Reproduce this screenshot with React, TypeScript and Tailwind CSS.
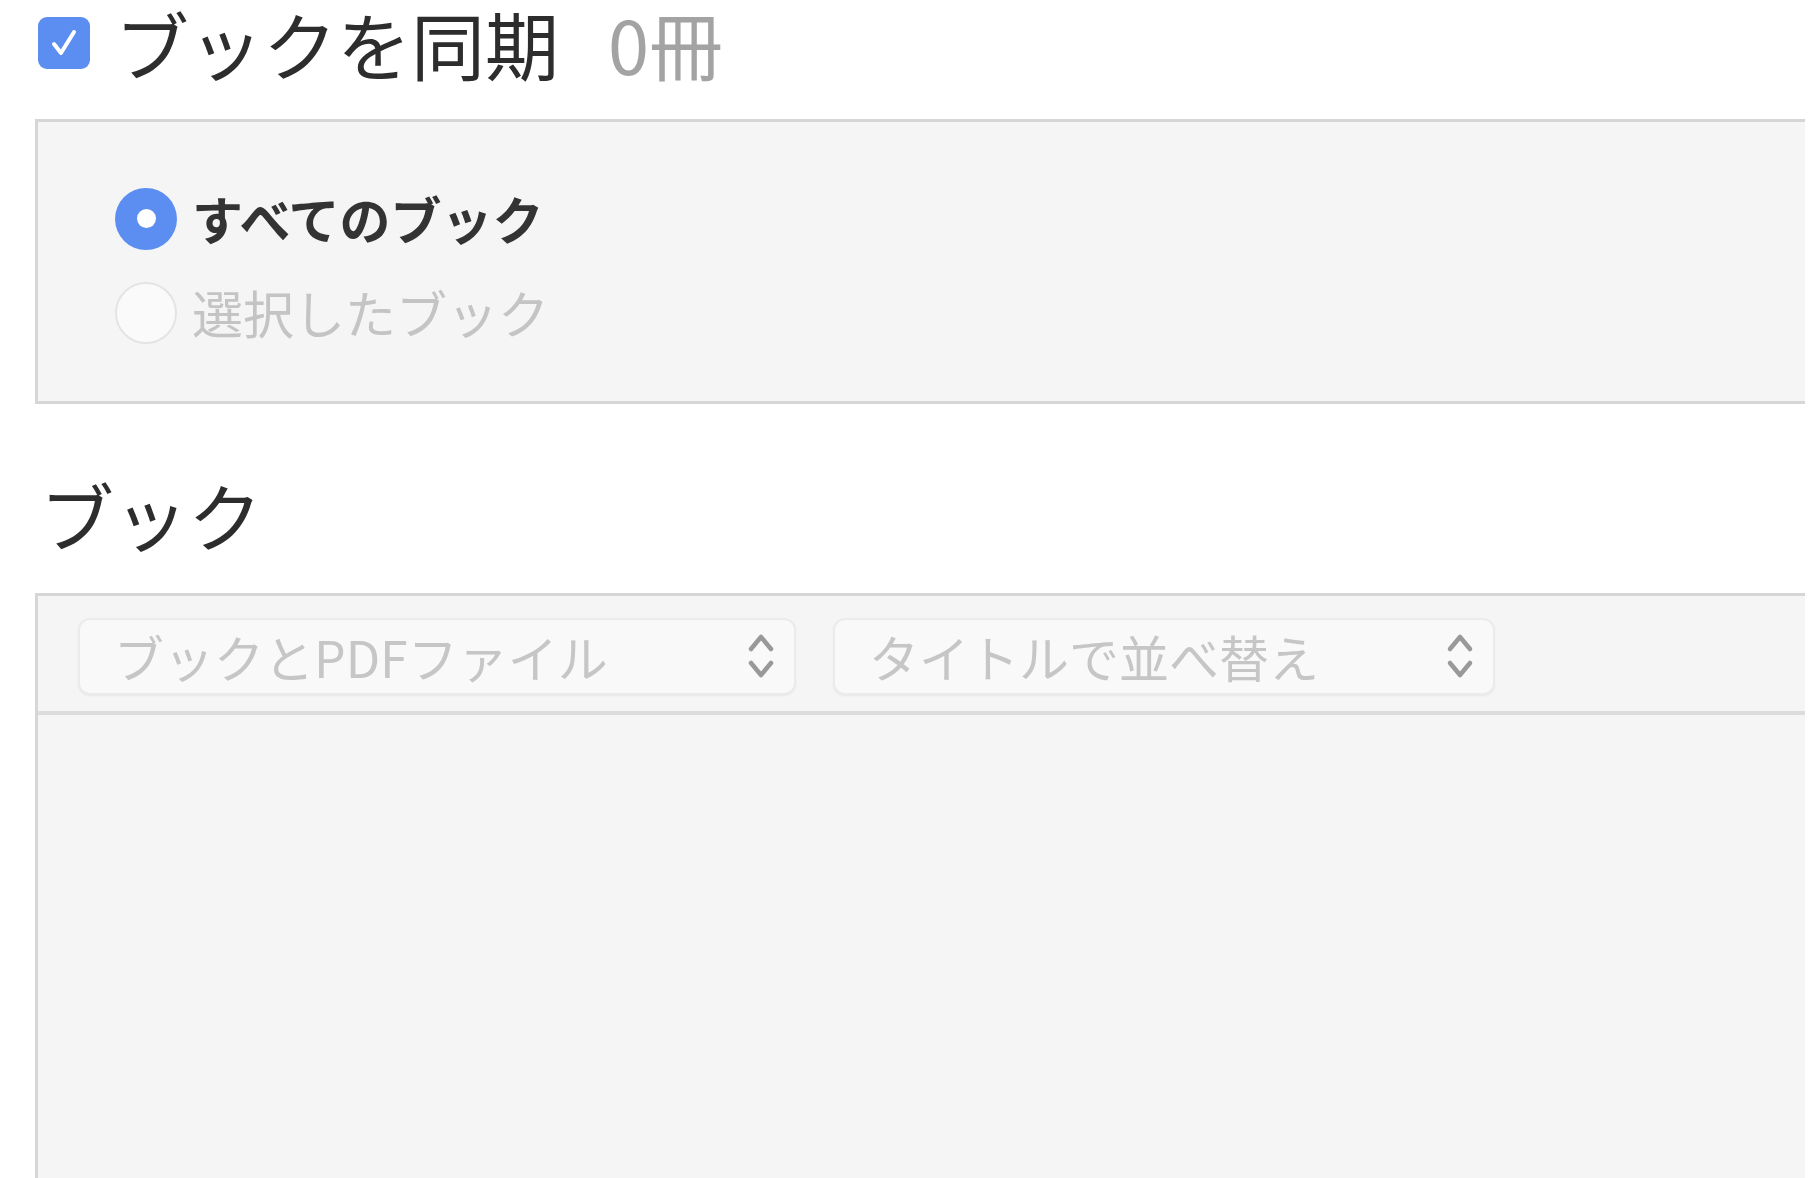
import React from "react";

const font = "font-['Hiragino_Sans','Noto_Sans_CJK_JP',sans-serif]";

function UpDown() {
  return (
    <svg width="34" height="56" viewBox="0 0 34 56" fill="none" className="shrink-0">
      <path d="M7 21 L17 9 L27 21" stroke="#999999" strokeWidth="4.5" strokeLinecap="round" strokeLinejoin="round" />
      <path d="M7 35 L17 47 L27 35" stroke="#999999" strokeWidth="4.5" strokeLinecap="round" strokeLinejoin="round" />
    </svg>
  );
}

function PopUp({ label, width }: { label: string; width: string }) {
  return (
    <div
      className={`${width} h-[77px] flex items-center justify-between pl-[34px] pr-[16px] rounded-[12px] bg-[#f9f9f9] border-2 border-[#ebebeb] shadow-[0_1px_2px_rgba(0,0,0,0.06)]`}
    >
      <span className="text-[50px] leading-tight text-[#c6c6c6] whitespace-nowrap">{label}</span>
      <UpDown />
    </div>
  );
}

export default function App() {
  return (
    <div className={`w-[1810px] h-[1178px] overflow-hidden bg-white flex flex-col ${font}`}>
      {/* header */}
      <div className="h-[119px] pt-[2px] pl-[38px]">
        <div className="flex items-center">
          <div className="w-[52px] h-[52px] rounded-[9px] bg-[#5b8ef0] flex items-center justify-center">
            <svg width="40" height="40" viewBox="0 0 40 40" fill="none">
              <path d="M10 21 L17 30 L30 9" stroke="white" strokeWidth="4" strokeLinecap="round" strokeLinejoin="round" />
            </svg>
          </div>
          <span className="ml-[25px] text-[74px] leading-[1.1] text-[#2d2d2d] whitespace-nowrap">ブックを同期</span>
          <span className="ml-[49px] text-[74px] leading-[1.1] text-[#a3a3a3] whitespace-nowrap">0冊</span>
        </div>
      </div>

      {/* sync options */}
      <div className="ml-[35px] mr-[5px] h-[285px] border-[3px] border-r-0 border-[#d6d6d6] bg-[#f5f5f5] pl-[77px] pt-[65px] flex flex-col gap-[30px]">
        <div className="flex items-center">
          <div className="w-[62px] h-[62px] rounded-full bg-[#5b8ef0] flex items-center justify-center">
            <div className="w-[19px] h-[19px] rounded-full bg-white" />
          </div>
          <span className="ml-[15px] text-[51px] leading-tight font-bold text-[#333333] whitespace-nowrap">すべてのブック</span>
        </div>
        <div className="flex items-center">
          <div className="w-[62px] h-[62px] rounded-full bg-[#fafafa] border-2 border-[#e4e4e4]" />
          <span className="ml-[15px] text-[51px] leading-tight text-[#c4c4c4] whitespace-nowrap">選択したブック</span>
        </div>
      </div>

      {/* books heading */}
      <div className="mt-[64px] pl-[40px] text-[74px] leading-tight text-[#2d2d2d]">ブック</div>

      {/* books list */}
      <div className="mt-[32px] ml-[35px] mr-[5px] flex-1 border-[3px] border-r-0 border-b-0 border-[#d6d6d6] bg-[#f5f5f5] flex flex-col">
        <div className="pt-[22px] pb-[16px] pl-[40px] flex items-center gap-[37px] border-b-[4px] border-[#dcdcdc]">
          <PopUp label="ブックとPDFファイル" width="w-[718px]" />
          <PopUp label="タイトルで並べ替え" width="w-[662px]" />
        </div>
        <div className="flex-1 bg-[#f5f5f5]" />
      </div>
    </div>
  );
}
